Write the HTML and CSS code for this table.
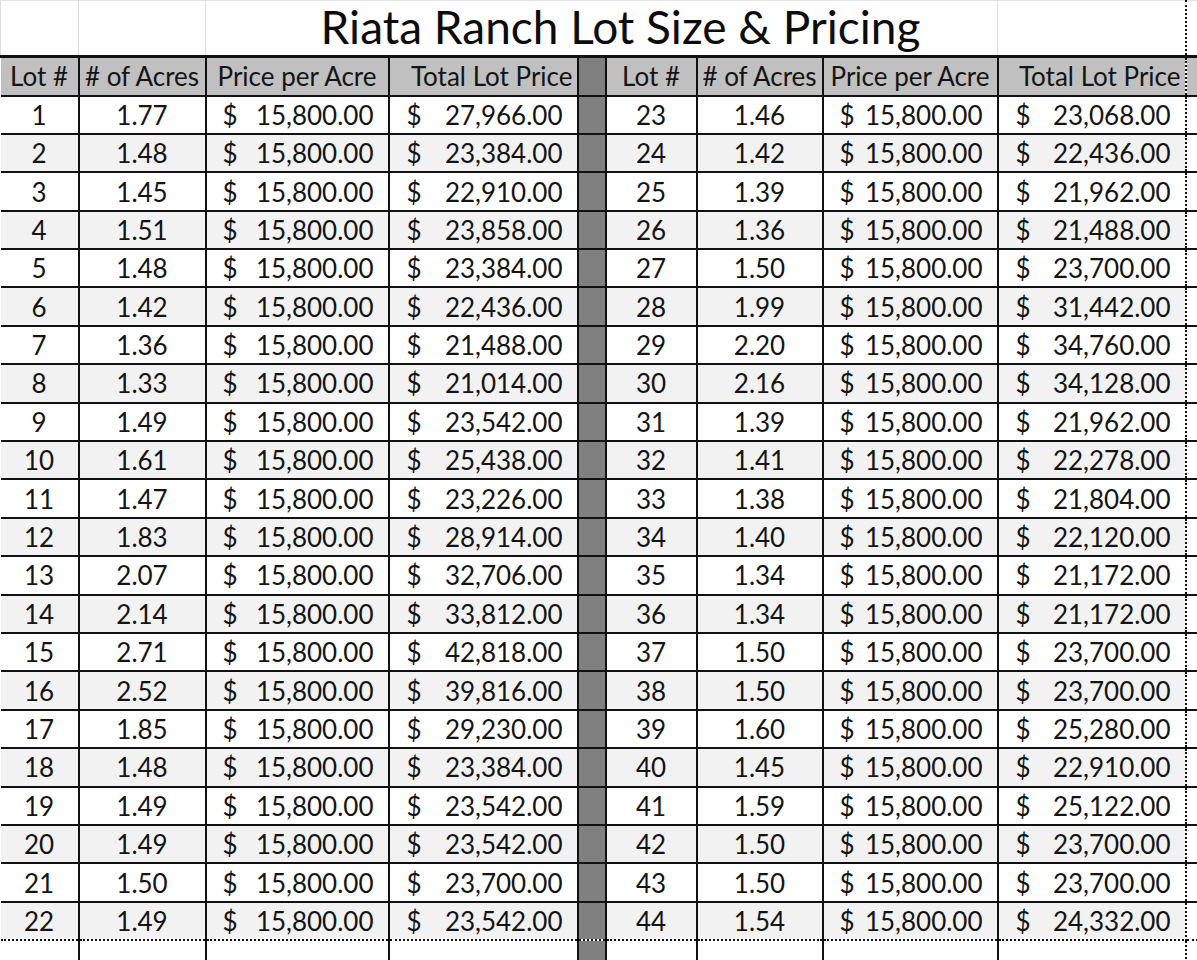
FILE: index.html
```html
<!DOCTYPE html>
<html lang="en">
<head>
<meta charset="utf-8">
<title>Riata Ranch Lot Size &amp; Pricing</title>
<link rel="stylesheet" href="styles.css">
</head>
<body>
<table class="sheet">
<colgroup>
<col class="c-lot"><col class="c-acres"><col class="c-price"><col class="c-total">
<col class="c-gap">
<col class="c-lot2"><col class="c-acres2"><col class="c-price2"><col class="c-total2">
<col class="c-rest">
</colgroup>
<tr class="title-row">
<td></td><td></td>
<td class="title" colspan="6">Riata Ranch Lot Size &amp; Pricing</td>
<td class="t-last"></td><td class="rest"></td>
</tr>
<tr class="head">
<th>Lot #</th><th># of Acres</th><th>Price per Acre</th><th class="h-total">Total Lot Price</th>
<td class="gap"></td>
<th>Lot #</th><th># of Acres</th><th>Price per Acre</th><th class="h-total last">Total Lot Price</th>
<td class="rest"></td>
</tr>
<tr><td>1</td><td>1.77</td><td class="pp"><div class="acct"><span>$</span><span>15,800.00</span></div></td><td class="tp"><div class="acct"><span>$</span><span>27,966.00</span></div></td><td class="gap"></td><td>23</td><td>1.46</td><td class="pp"><div class="acct"><span>$</span><span>15,800.00</span></div></td><td class="tp last"><div class="acct"><span>$</span><span>23,068.00</span></div></td><td class="rest"></td></tr>
<tr class="alt"><td>2</td><td>1.48</td><td class="pp"><div class="acct"><span>$</span><span>15,800.00</span></div></td><td class="tp"><div class="acct"><span>$</span><span>23,384.00</span></div></td><td class="gap"></td><td>24</td><td>1.42</td><td class="pp"><div class="acct"><span>$</span><span>15,800.00</span></div></td><td class="tp last"><div class="acct"><span>$</span><span>22,436.00</span></div></td><td class="rest"></td></tr>
<tr><td>3</td><td>1.45</td><td class="pp"><div class="acct"><span>$</span><span>15,800.00</span></div></td><td class="tp"><div class="acct"><span>$</span><span>22,910.00</span></div></td><td class="gap"></td><td>25</td><td>1.39</td><td class="pp"><div class="acct"><span>$</span><span>15,800.00</span></div></td><td class="tp last"><div class="acct"><span>$</span><span>21,962.00</span></div></td><td class="rest"></td></tr>
<tr class="alt"><td>4</td><td>1.51</td><td class="pp"><div class="acct"><span>$</span><span>15,800.00</span></div></td><td class="tp"><div class="acct"><span>$</span><span>23,858.00</span></div></td><td class="gap"></td><td>26</td><td>1.36</td><td class="pp"><div class="acct"><span>$</span><span>15,800.00</span></div></td><td class="tp last"><div class="acct"><span>$</span><span>21,488.00</span></div></td><td class="rest"></td></tr>
<tr><td>5</td><td>1.48</td><td class="pp"><div class="acct"><span>$</span><span>15,800.00</span></div></td><td class="tp"><div class="acct"><span>$</span><span>23,384.00</span></div></td><td class="gap"></td><td>27</td><td>1.50</td><td class="pp"><div class="acct"><span>$</span><span>15,800.00</span></div></td><td class="tp last"><div class="acct"><span>$</span><span>23,700.00</span></div></td><td class="rest"></td></tr>
<tr class="alt"><td>6</td><td>1.42</td><td class="pp"><div class="acct"><span>$</span><span>15,800.00</span></div></td><td class="tp"><div class="acct"><span>$</span><span>22,436.00</span></div></td><td class="gap"></td><td>28</td><td>1.99</td><td class="pp"><div class="acct"><span>$</span><span>15,800.00</span></div></td><td class="tp last"><div class="acct"><span>$</span><span>31,442.00</span></div></td><td class="rest"></td></tr>
<tr><td>7</td><td>1.36</td><td class="pp"><div class="acct"><span>$</span><span>15,800.00</span></div></td><td class="tp"><div class="acct"><span>$</span><span>21,488.00</span></div></td><td class="gap"></td><td>29</td><td>2.20</td><td class="pp"><div class="acct"><span>$</span><span>15,800.00</span></div></td><td class="tp last"><div class="acct"><span>$</span><span>34,760.00</span></div></td><td class="rest"></td></tr>
<tr class="alt"><td>8</td><td>1.33</td><td class="pp"><div class="acct"><span>$</span><span>15,800.00</span></div></td><td class="tp"><div class="acct"><span>$</span><span>21,014.00</span></div></td><td class="gap"></td><td>30</td><td>2.16</td><td class="pp"><div class="acct"><span>$</span><span>15,800.00</span></div></td><td class="tp last"><div class="acct"><span>$</span><span>34,128.00</span></div></td><td class="rest"></td></tr>
<tr><td>9</td><td>1.49</td><td class="pp"><div class="acct"><span>$</span><span>15,800.00</span></div></td><td class="tp"><div class="acct"><span>$</span><span>23,542.00</span></div></td><td class="gap"></td><td>31</td><td>1.39</td><td class="pp"><div class="acct"><span>$</span><span>15,800.00</span></div></td><td class="tp last"><div class="acct"><span>$</span><span>21,962.00</span></div></td><td class="rest"></td></tr>
<tr class="alt"><td>10</td><td>1.61</td><td class="pp"><div class="acct"><span>$</span><span>15,800.00</span></div></td><td class="tp"><div class="acct"><span>$</span><span>25,438.00</span></div></td><td class="gap"></td><td>32</td><td>1.41</td><td class="pp"><div class="acct"><span>$</span><span>15,800.00</span></div></td><td class="tp last"><div class="acct"><span>$</span><span>22,278.00</span></div></td><td class="rest"></td></tr>
<tr><td>11</td><td>1.47</td><td class="pp"><div class="acct"><span>$</span><span>15,800.00</span></div></td><td class="tp"><div class="acct"><span>$</span><span>23,226.00</span></div></td><td class="gap"></td><td>33</td><td>1.38</td><td class="pp"><div class="acct"><span>$</span><span>15,800.00</span></div></td><td class="tp last"><div class="acct"><span>$</span><span>21,804.00</span></div></td><td class="rest"></td></tr>
<tr class="alt"><td>12</td><td>1.83</td><td class="pp"><div class="acct"><span>$</span><span>15,800.00</span></div></td><td class="tp"><div class="acct"><span>$</span><span>28,914.00</span></div></td><td class="gap"></td><td>34</td><td>1.40</td><td class="pp"><div class="acct"><span>$</span><span>15,800.00</span></div></td><td class="tp last"><div class="acct"><span>$</span><span>22,120.00</span></div></td><td class="rest"></td></tr>
<tr><td>13</td><td>2.07</td><td class="pp"><div class="acct"><span>$</span><span>15,800.00</span></div></td><td class="tp"><div class="acct"><span>$</span><span>32,706.00</span></div></td><td class="gap"></td><td>35</td><td>1.34</td><td class="pp"><div class="acct"><span>$</span><span>15,800.00</span></div></td><td class="tp last"><div class="acct"><span>$</span><span>21,172.00</span></div></td><td class="rest"></td></tr>
<tr class="alt"><td>14</td><td>2.14</td><td class="pp"><div class="acct"><span>$</span><span>15,800.00</span></div></td><td class="tp"><div class="acct"><span>$</span><span>33,812.00</span></div></td><td class="gap"></td><td>36</td><td>1.34</td><td class="pp"><div class="acct"><span>$</span><span>15,800.00</span></div></td><td class="tp last"><div class="acct"><span>$</span><span>21,172.00</span></div></td><td class="rest"></td></tr>
<tr><td>15</td><td>2.71</td><td class="pp"><div class="acct"><span>$</span><span>15,800.00</span></div></td><td class="tp"><div class="acct"><span>$</span><span>42,818.00</span></div></td><td class="gap"></td><td>37</td><td>1.50</td><td class="pp"><div class="acct"><span>$</span><span>15,800.00</span></div></td><td class="tp last"><div class="acct"><span>$</span><span>23,700.00</span></div></td><td class="rest"></td></tr>
<tr class="alt"><td>16</td><td>2.52</td><td class="pp"><div class="acct"><span>$</span><span>15,800.00</span></div></td><td class="tp"><div class="acct"><span>$</span><span>39,816.00</span></div></td><td class="gap"></td><td>38</td><td>1.50</td><td class="pp"><div class="acct"><span>$</span><span>15,800.00</span></div></td><td class="tp last"><div class="acct"><span>$</span><span>23,700.00</span></div></td><td class="rest"></td></tr>
<tr><td>17</td><td>1.85</td><td class="pp"><div class="acct"><span>$</span><span>15,800.00</span></div></td><td class="tp"><div class="acct"><span>$</span><span>29,230.00</span></div></td><td class="gap"></td><td>39</td><td>1.60</td><td class="pp"><div class="acct"><span>$</span><span>15,800.00</span></div></td><td class="tp last"><div class="acct"><span>$</span><span>25,280.00</span></div></td><td class="rest"></td></tr>
<tr class="alt"><td>18</td><td>1.48</td><td class="pp"><div class="acct"><span>$</span><span>15,800.00</span></div></td><td class="tp"><div class="acct"><span>$</span><span>23,384.00</span></div></td><td class="gap"></td><td>40</td><td>1.45</td><td class="pp"><div class="acct"><span>$</span><span>15,800.00</span></div></td><td class="tp last"><div class="acct"><span>$</span><span>22,910.00</span></div></td><td class="rest"></td></tr>
<tr><td>19</td><td>1.49</td><td class="pp"><div class="acct"><span>$</span><span>15,800.00</span></div></td><td class="tp"><div class="acct"><span>$</span><span>23,542.00</span></div></td><td class="gap"></td><td>41</td><td>1.59</td><td class="pp"><div class="acct"><span>$</span><span>15,800.00</span></div></td><td class="tp last"><div class="acct"><span>$</span><span>25,122.00</span></div></td><td class="rest"></td></tr>
<tr class="alt"><td>20</td><td>1.49</td><td class="pp"><div class="acct"><span>$</span><span>15,800.00</span></div></td><td class="tp"><div class="acct"><span>$</span><span>23,542.00</span></div></td><td class="gap"></td><td>42</td><td>1.50</td><td class="pp"><div class="acct"><span>$</span><span>15,800.00</span></div></td><td class="tp last"><div class="acct"><span>$</span><span>23,700.00</span></div></td><td class="rest"></td></tr>
<tr><td>21</td><td>1.50</td><td class="pp"><div class="acct"><span>$</span><span>15,800.00</span></div></td><td class="tp"><div class="acct"><span>$</span><span>23,700.00</span></div></td><td class="gap"></td><td>43</td><td>1.50</td><td class="pp"><div class="acct"><span>$</span><span>15,800.00</span></div></td><td class="tp last"><div class="acct"><span>$</span><span>23,700.00</span></div></td><td class="rest"></td></tr>
<tr class="alt end"><td>22</td><td>1.49</td><td class="pp"><div class="acct"><span>$</span><span>15,800.00</span></div></td><td class="tp"><div class="acct"><span>$</span><span>23,542.00</span></div></td><td class="gap"></td><td>44</td><td>1.54</td><td class="pp"><div class="acct"><span>$</span><span>15,800.00</span></div></td><td class="tp last"><div class="acct"><span>$</span><span>24,332.00</span></div></td><td class="rest"></td></tr>
<tr class="after"><td></td><td></td><td></td><td></td><td class="gap"></td><td></td><td></td><td></td><td class="last"></td><td class="rest"></td></tr>
</table>
</body>
</html>
```

FILE: styles.css
```css
html, body {
  margin: 0;
  padding: 0;
  background: #ffffff;
  overflow: hidden;
}

.sheet {
  border-collapse: collapse;
  table-layout: fixed;
  width: 1217px;
  font-family: Lato, "Open Sans", "Liberation Sans", sans-serif;
  font-size: 26px;
  color: #141414;
  font-variant-numeric: tabular-nums;
}

.c-lot { width: 78px; }
.c-acres { width: 127px; }
.c-price { width: 183px; }
.c-total { width: 189px; }
.c-gap { width: 28px; }
.c-lot2 { width: 91px; }
.c-acres2 { width: 126px; }
.c-price2 { width: 175px; }
.c-total2 { width: 188px; }
.c-rest { width: 32px; }

.sheet td,
.sheet th {
  border: 2px solid #111;
  padding: 2px 0 0 0;
  text-align: center;
  vertical-align: middle;
  font-weight: normal;
  white-space: nowrap;
  overflow: hidden;
  line-height: 1.15;
}

.sheet tr > :first-child {
  border-left: none;
}

.sheet tr {
  height: 38.4px;
}

.sheet .alt td {
  background: #f2f2f2;
}

/* title row */
.sheet .title-row {
  height: 56px;
}

.sheet .title-row td {
  border-top: 1px solid #e4e4e4;
  border-left: 1px solid #dcdcdc;
  border-right: 1px solid #dcdcdc;
  border-bottom: 3px solid #111;
  background: #fff;
}

.sheet .title-row td.title {
  font-size: 46px;
  line-height: 50px;
  padding: 0 0 2px 38px;
  overflow: visible;
  color: #0c0c0c;
}

/* header row */
.sheet .head {
  height: 39px;
}

.sheet .head th,
.sheet .head td {
  background: #c0c0c0;
}

.sheet .head th.h-total {
  text-align: right;
  padding-right: 4px;
}

/* divider column */
.sheet td.gap,
.sheet .alt td.gap,
.sheet .head td.gap {
  background: #808080;
}

/* accounting cells */
.acct {
  display: flex;
  justify-content: space-between;
}

.sheet td.pp {
  padding-left: 16px;
  padding-right: 14px;
}

.sheet td.tp {
  padding-left: 17px;
  padding-right: 14px;
}

/* right print edge */
.sheet td.last,
.sheet th.last,
.sheet .title-row td.t-last {
  border-right: 2px dotted #111;
}

.sheet td.rest,
.sheet .title-row td.rest {
  border-left: 2px dotted #111;
  border-right: none;
  background: #fff;
}

.sheet .alt td.rest {
  background: #fff;
}

.sheet .head td.rest {
  background: #c0c0c0;
}

/* end of print area */
.sheet .end td {
  border-bottom: 2px dotted #111;
}

.sheet .after {
  height: 30px;
}

.sheet .after td {
  border-top: 2px dotted #111;
  border-bottom: 1px solid #e0e0e0;
}
```
